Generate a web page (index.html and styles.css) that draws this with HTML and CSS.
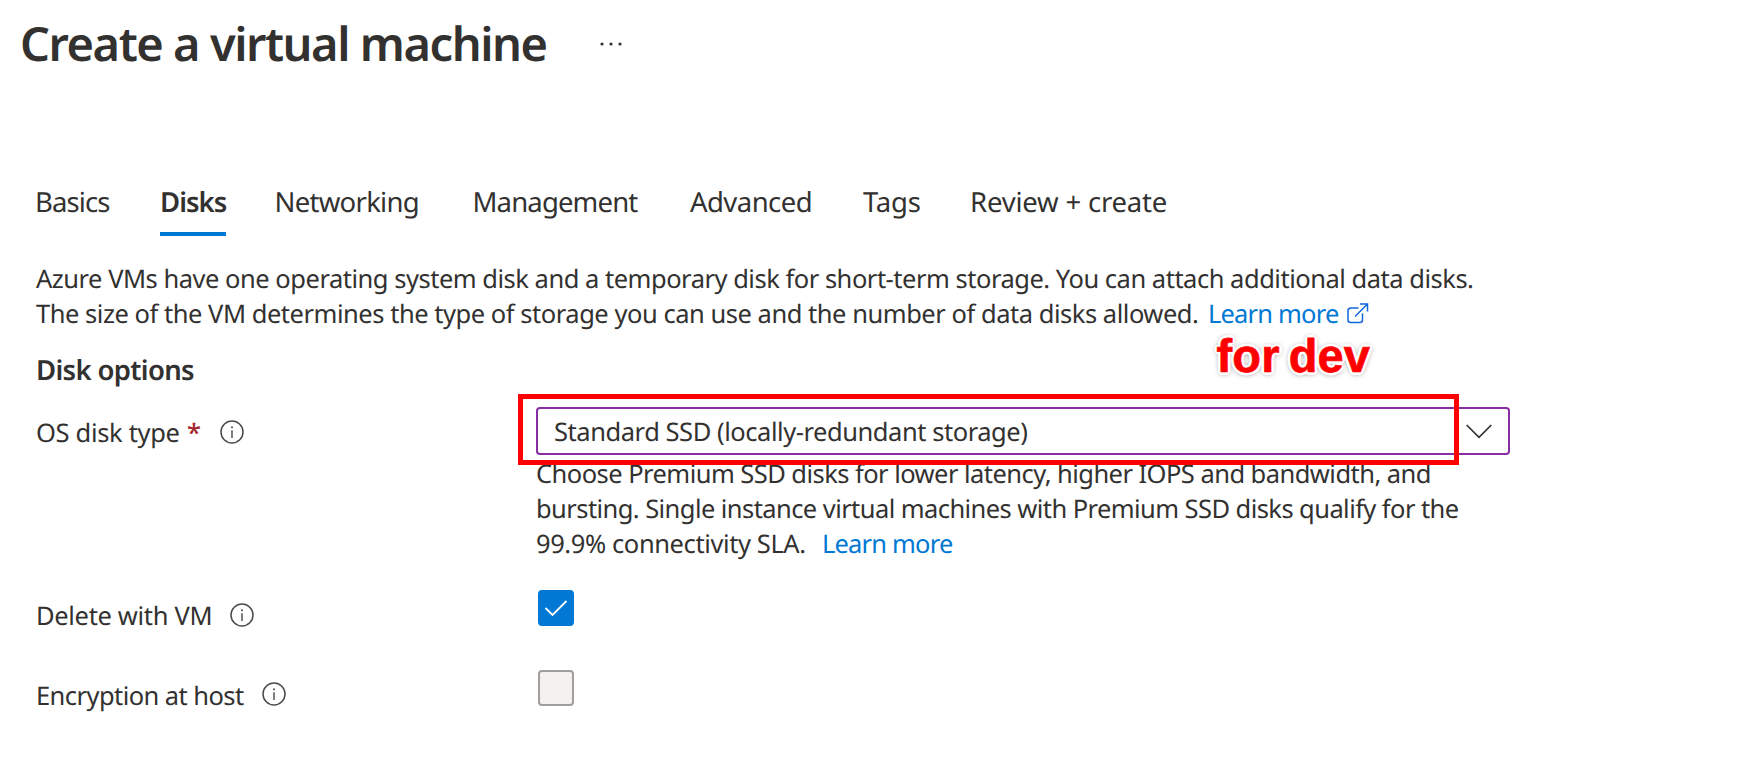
FILE: index.html
```html
<!DOCTYPE html>
<html lang="en">
<head>
<meta charset="utf-8">
<title>Create a virtual machine</title>
<link rel="stylesheet" href="styles.css">
</head>
<body>
<svg class="defs" aria-hidden="true">
  <symbol id="info" viewBox="0 0 24 24">
    <circle cx="12" cy="12" r="11" fill="none" stroke="#4c4b4a" stroke-width="1.5"/>
    <path d="M12 10.2V18" stroke="#605e5c" stroke-width="1.6"/>
    <circle cx="12" cy="7.3" r="1.1" fill="#605e5c"/>
  </symbol>
</svg>
<header class="header">
  <h1 class="title">Create a virtual machine</h1>
  <svg class="more" viewBox="0 0 24 8"><circle cx="3" cy="4" r="1.6"/><circle cx="12" cy="4" r="1.6"/><circle cx="21" cy="4" r="1.6"/></svg>
</header>
<nav class="tabs">
  <a class="tab basics">Basics</a>
  <a class="tab active">Disks</a>
  <a class="tab networking">Networking</a>
  <a class="tab management">Management</a>
  <a class="tab advanced">Advanced</a>
  <a class="tab tags">Tags</a>
  <a class="tab review">Review + create</a>
</nav>
<main class="content">
  <div class="intro">
    <p class="line intro-first">Azure VMs have one operating system disk and a temporary disk for short-term storage. You can attach additional data disks.</p>
    <p class="line intro-second"><span class="intro-text">The size of the VM determines the type of storage you can use and the number of data disks allowed.</span><a class="link">Learn more</a><svg class="external" viewBox="0 0 22 22"><path d="M11.5 5H4.5Q1 5 1 7.5V17Q1 19.5 3.500 19.500H13Q15.500 19.500 15.500 17V10.500M8 13.500L20.500 1M13 1H20.500V8.500" /></svg></p>
  </div>
  <h2 class="section-title">Disk options</h2>
  <div class="field disk-field">
    <label class="label disk-label"><span class="disk-name">OS disk type</span><span class="required">*</span><svg class="info"><use href="#info"/></svg></label>
    <div class="control">
      <div class="select">
        <span class="select-value">Standard SSD (locally-redundant storage)</span>
        <svg class="chevron" viewBox="0 0 26 15"><path d="M.7 1L13 13.300L25.300 1"/></svg>
        <div class="highlight"><span class="note">for dev</span></div>
      </div>
      <div class="help">
        <p class="line help-first">Choose Premium SSD disks for lower latency, higher IOPS and bandwidth, and</p>
        <p class="line help-second">bursting. Single instance virtual machines with Premium SSD disks qualify for the</p>
        <p class="line help-third"><span class="help-text">99.9% connectivity SLA.</span><a class="link">Learn more</a></p>
      </div>
    </div>
  </div>
  <div class="field check-field">
    <label class="label delete-label"><span class="delete-name">Delete with VM</span><svg class="info"><use href="#info"/></svg></label>
    <span class="checkbox checked"><svg class="tick" viewBox="0 0 36 36"><path d="M7.500 18L14.500 25L28.500 11"/></svg></span>
  </div>
  <div class="field check-field">
    <label class="label host-label"><span class="host-name">Encryption at host</span><svg class="info host-info"><use href="#info"/></svg></label>
    <span class="checkbox"></span>
  </div>
</main>
</body>
</html>
```
FILE: styles.css
```css
* { box-sizing: border-box; }
body {
  margin: 0;
  height: 778px;
  overflow: hidden;
  background: #fff;
  color: #323130;
  font: 25.5px/35px "Noto Sans", "Open Sans", sans-serif;
  text-rendering: geometricPrecision;
}
h1, h2, p { margin: 0; }
.defs { display: none; }
svg { flex: none; overflow: visible; }

.header { display: flex; height: 176px; padding: 11px 0 0 20px; }
.title { width: 579px; font-size: 47px; font-weight: 600; line-height: 64px; letter-spacing: -1.45px; white-space: nowrap; }
.more { width: 24px; height: 8px; margin-top: 29px; fill: #323130; }

.tabs {
  display: grid;
  grid-template-columns: 124px 114.500px 198px 217.500px 173px 107px 210px;
  height: 60px;
  padding-left: 36px;
}
.tab { padding-top: 9px; font-size: 27.5px; line-height: 36px; white-space: nowrap; }
.basics { margin-left: -1px; letter-spacing: -.9px; }
.management { letter-spacing: -.85px; }
.active { width: 66px; border-bottom: 4px solid #0078d4; font-weight: 600; letter-spacing: -1px; }
.networking { letter-spacing: -.72px; }
.advanced { letter-spacing: -.56px; }
.tags { letter-spacing: -.25px; }
.review { letter-spacing: -.2px; }

.content { padding: 26px 0 0 36px; }
.line { display: flex; height: 35px; white-space: nowrap; }
.intro-first { letter-spacing: -.485px; }
.intro-text { width: 1172px; letter-spacing: -.467px; }
.link { color: #0078d4; letter-spacing: -.82px; }
.external { width: 22px; height: 22px; margin: 6px 0 0 9px; fill: none; stroke: #1267dc; stroke-width: 1.5; }
.section-title { margin-top: 21px; font-size: 27.5px; font-weight: 600; line-height: 36px; letter-spacing: -.67px; }

.field { display: grid; grid-template-columns: 500px 974px; }
.disk-field { margin-top: 18px; }
.label { display: flex; white-space: nowrap; }
.disk-label { padding-top: 9px; }
.disk-name { width: 151px; letter-spacing: -.33px; }
.required { width: 33px; color: #a4262c; font-weight: 500; }
.info { width: 24px; height: 24px; margin-top: 4px; }
.select {
  position: relative;
  display: flex;
  align-items: center;
  justify-content: space-between;
  height: 48px;
  padding: 0 16px;
  border: 2px solid #8a2da5;
  border-radius: 4px;
}
.select-value { padding-top: 2px; letter-spacing: -.45px; }
.chevron { width: 26px; height: 15px; fill: none; stroke: #323130; stroke-width: 1.7; }
.highlight { position: absolute; left: -20px; top: -15px; width: 941px; height: 71px; border: 5px solid #f00; }
.note {
  position: absolute;
  right: 84px;
  top: -70px;
  color: #f00;
  font: 700 47px/54px "Liberation Sans", Arial, sans-serif;
  letter-spacing: .1px;
  word-spacing: -4px;
  white-space: nowrap;
  -webkit-text-stroke: .7px #f00;
  text-shadow: -3px 0 #fff, 3px 0 #fff, 0 -3px #fff, 0 3px #fff, -2px -2px #fff, 2px -2px #fff, -2px 2px #fff, 2px 2px #fff, 0 0 5px #777, 0 1px 6px #777;
}
.help { margin-top: 2px; }
.help-first { letter-spacing: -.545px; }
.help-second { letter-spacing: -.57px; }
.help-text { width: 286px; letter-spacing: -.4px; }

.check-field { height: 80px; }
.disk-field + .check-field { margin-top: 28px; }
.check-field .label { padding-top: 9px; }
.delete-name { width: 194px; letter-spacing: -.33px; }
.host-name { width: 226px; letter-spacing: -.56px; }
.host-info { margin-top: 3px; }
.checkbox { width: 36px; height: 36px; margin-left: 2px; border: 2px solid #a19f9d; border-radius: 4px; background: #f3f2f1; }
.checked { border: 0; background: #0078d4; }
.tick { display: block; width: 36px; height: 36px; fill: none; stroke: #fff; stroke-width: 1.8; }
```
